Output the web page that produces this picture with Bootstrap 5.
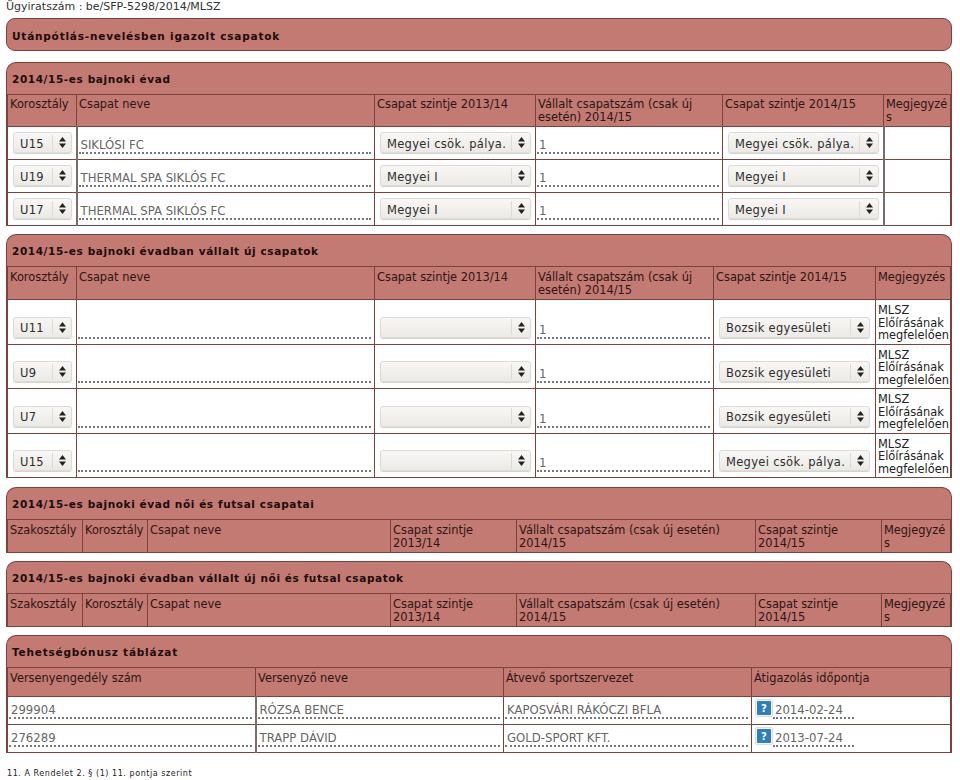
<!DOCTYPE html>
<html lang="hu"><head><meta charset="utf-8"><title>Ügyiratszám</title>
<link href="https://cdn.jsdelivr.net/npm/bootstrap@5.3.0/dist/css/bootstrap.min.css" rel="stylesheet">
<style>
body{font-family:"DejaVu Sans",sans-serif;font-size:11.4px;line-height:13px;color:#222;background:#fff;padding:0 8px 0 6px;width:960px;overflow-x:hidden}
.docno{height:18px;color:#333;font-size:11px}
.pnl{border:1px solid #7d4240;border-bottom:0;border-radius:10px 10px 0 0;background:#c27a73;margin-bottom:8px;overflow:hidden}
.pnl-single{border-radius:9px;height:33px;margin-bottom:11px;border-bottom:1px solid #7d4240}
.pnl-gap{margin-bottom:9px}
.pnl-title{font-weight:700;font-size:10.5px;letter-spacing:.8px;color:#200c0c;height:31px;padding:9px 0 0 5px;line-height:14px}
.pnl-single .pnl-title{padding-top:10px}
.pnl-title-num{letter-spacing:.6px}
.grid{width:100%;border-collapse:collapse;table-layout:fixed;margin:0}
.grid th,.grid td{border:1px solid #7d4240;padding:3px 2px 2px;font-weight:400;vertical-align:top;color:#2a1414;overflow:hidden}
.grid thead th{color:#2e1414;height:32px}
.grid.t-b thead th,.grid.t-c thead th{height:33px;padding-top:4px;padding-bottom:1px}
.grid th.wrapall{word-break:break-all}
.grid td{background:#fff;vertical-align:bottom;padding:0 3px 5px}
.grid td.gl{border-left:2px solid #7d6a6a}
.grid td.note{vertical-align:top;padding:4px 0 0 2px;color:#222;line-height:12.5px}
.r33{height:33px}.r44{height:44.5px}.r28{height:28px}
.grid td.plain{padding:0 3px 5px 1px;vertical-align:bottom}
.fld{display:block;border-bottom:2px dotted #777;color:#666;height:19px;line-height:21px;padding-left:2px;white-space:nowrap;overflow:hidden;font-size:11.7px}
.pick{display:flex;align-items:center;height:21px;border:1px solid #dedbd6;border-radius:3px;background:linear-gradient(#f8f7f5,#eceae6);box-shadow:0 1px 1px #d4d1cc;color:#2d2d2d;padding-left:6px;margin:0 0 1px 2px;font-size:11.5px;letter-spacing:.3px;white-space:nowrap}
.pick-lbl{flex:1 1 auto;padding-top:3px;overflow:hidden}
.pick-arr{flex:0 0 19px;height:16px;border-left:1px solid #dedbd6;display:flex;align-items:center;justify-content:center}
.pick-w1{width:59px}
.pick-w2{width:151px}
.pick-w4{width:151px}
.t-a col:nth-child(1){width:69px}.t-a col:nth-child(2){width:298px}.t-a col:nth-child(3){width:161px}.t-a col:nth-child(4){width:187px}.t-a col:nth-child(5){width:161px}
.t-b col:nth-child(1){width:69px}.t-b col:nth-child(2){width:298px}.t-b col:nth-child(3){width:161px}.t-b col:nth-child(4){width:178px}.t-b col:nth-child(5){width:162px}
.t-c col:nth-child(1){width:75px}.t-c col:nth-child(2){width:65px}.t-c col:nth-child(3){width:243px}.t-c col:nth-child(4){width:126px}.t-c col:nth-child(5){width:239px}.t-c col:nth-child(6){width:126px}
.t-d col:nth-child(1){width:248px}.t-d col:nth-child(2){width:248px}.t-d col:nth-child(3){width:248px}
.grid.t-d thead th{height:29px;padding-top:4px}
.helpbtn{flex:0 0 auto;width:18px;height:18px;border:1px solid #d8dde0;background:#f2f4f5;border-radius:2px;display:inline-flex;align-items:center;justify-content:center;margin-bottom:2px}
.datecell{display:flex;align-items:flex-end;padding-left:2px}
.fld-date{width:81px}
.foot{margin-top:15px;padding-left:1px;font-size:8px;letter-spacing:.55px;color:#222;line-height:11px}
</style></head><body>
<div class="docno">Ügyiratszám : be/SFP-5298/2014/MLSZ</div>
<div class="pnl pnl-single"><div class="pnl-title">Utánpótlás-nevelésben igazolt csapatok</div></div>

<div class="pnl"><div class="pnl-title pnl-title-num">2014/15-es bajnoki évad</div>
<table class="grid t-a"><colgroup><col><col><col><col><col><col></colgroup>
<thead><tr><th>Korosztály</th><th>Csapat neve</th><th>Csapat szintje 2013/14</th><th>Vállalt csapatszám (csak új esetén) 2014/15</th><th>Csapat szintje 2014/15</th><th class="wrapall">Megjegyzés</th></tr></thead>
<tbody>
<tr class="r33"><td><div class="pick pick-w1"><span class="pick-lbl">U15</span><span class="pick-arr"><svg width="7" height="11" viewBox="0 0 7 11"><path d="M3.5 0 7 4.5H0zM3.5 11 0 6.5h7z" fill="#222"/></svg></span></div></td><td class="gl plain"><span class="fld">SIKLÓSI FC</span></td><td><div class="pick pick-w2"><span class="pick-lbl">Megyei csök. pálya.</span><span class="pick-arr"><svg width="7" height="11" viewBox="0 0 7 11"><path d="M3.5 0 7 4.5H0zM3.5 11 0 6.5h7z" fill="#222"/></svg></span></div></td><td class="plain"><span class="fld">1</span></td><td><div class="pick pick-w2"><span class="pick-lbl">Megyei csök. pálya.</span><span class="pick-arr"><svg width="7" height="11" viewBox="0 0 7 11"><path d="M3.5 0 7 4.5H0zM3.5 11 0 6.5h7z" fill="#222"/></svg></span></div></td><td class="gl"></td></tr>
<tr class="r33"><td><div class="pick pick-w1"><span class="pick-lbl">U19</span><span class="pick-arr"><svg width="7" height="11" viewBox="0 0 7 11"><path d="M3.5 0 7 4.5H0zM3.5 11 0 6.5h7z" fill="#222"/></svg></span></div></td><td class="gl plain"><span class="fld">THERMAL SPA SIKLÓS FC</span></td><td><div class="pick pick-w2"><span class="pick-lbl">Megyei I</span><span class="pick-arr"><svg width="7" height="11" viewBox="0 0 7 11"><path d="M3.5 0 7 4.5H0zM3.5 11 0 6.5h7z" fill="#222"/></svg></span></div></td><td class="plain"><span class="fld">1</span></td><td><div class="pick pick-w2"><span class="pick-lbl">Megyei I</span><span class="pick-arr"><svg width="7" height="11" viewBox="0 0 7 11"><path d="M3.5 0 7 4.5H0zM3.5 11 0 6.5h7z" fill="#222"/></svg></span></div></td><td class="gl"></td></tr>
<tr class="r33"><td><div class="pick pick-w1"><span class="pick-lbl">U17</span><span class="pick-arr"><svg width="7" height="11" viewBox="0 0 7 11"><path d="M3.5 0 7 4.5H0zM3.5 11 0 6.5h7z" fill="#222"/></svg></span></div></td><td class="gl plain"><span class="fld">THERMAL SPA SIKLÓS FC</span></td><td><div class="pick pick-w2"><span class="pick-lbl">Megyei I</span><span class="pick-arr"><svg width="7" height="11" viewBox="0 0 7 11"><path d="M3.5 0 7 4.5H0zM3.5 11 0 6.5h7z" fill="#222"/></svg></span></div></td><td class="plain"><span class="fld">1</span></td><td><div class="pick pick-w2"><span class="pick-lbl">Megyei I</span><span class="pick-arr"><svg width="7" height="11" viewBox="0 0 7 11"><path d="M3.5 0 7 4.5H0zM3.5 11 0 6.5h7z" fill="#222"/></svg></span></div></td><td class="gl"></td></tr>
</tbody></table></div>

<div class="pnl pnl-gap"><div class="pnl-title pnl-title-num">2014/15-es bajnoki évadban vállalt új csapatok</div>
<table class="grid t-b"><colgroup><col><col><col><col><col><col></colgroup>
<thead><tr><th>Korosztály</th><th>Csapat neve</th><th>Csapat szintje 2013/14</th><th>Vállalt csapatszám (csak új esetén) 2014/15</th><th>Csapat szintje 2014/15</th><th>Megjegyzés</th></tr></thead>
<tbody>
<tr class="r44"><td><div class="pick pick-w1"><span class="pick-lbl">U11</span><span class="pick-arr"><svg width="7" height="11" viewBox="0 0 7 11"><path d="M3.5 0 7 4.5H0zM3.5 11 0 6.5h7z" fill="#222"/></svg></span></div></td><td class="plain"><span class="fld"></span></td><td><div class="pick pick-w2"><span class="pick-lbl"></span><span class="pick-arr"><svg width="7" height="11" viewBox="0 0 7 11"><path d="M3.5 0 7 4.5H0zM3.5 11 0 6.5h7z" fill="#222"/></svg></span></div></td><td class="plain"><span class="fld">1</span></td><td><div class="pick pick-w4"><span class="pick-lbl">Bozsik egyesületi</span><span class="pick-arr"><svg width="7" height="11" viewBox="0 0 7 11"><path d="M3.5 0 7 4.5H0zM3.5 11 0 6.5h7z" fill="#222"/></svg></span></div></td><td class="note">MLSZ Előírásának megfelelően</td></tr>
<tr class="r44"><td><div class="pick pick-w1"><span class="pick-lbl">U9</span><span class="pick-arr"><svg width="7" height="11" viewBox="0 0 7 11"><path d="M3.5 0 7 4.5H0zM3.5 11 0 6.5h7z" fill="#222"/></svg></span></div></td><td class="plain"><span class="fld"></span></td><td><div class="pick pick-w2"><span class="pick-lbl"></span><span class="pick-arr"><svg width="7" height="11" viewBox="0 0 7 11"><path d="M3.5 0 7 4.5H0zM3.5 11 0 6.5h7z" fill="#222"/></svg></span></div></td><td class="plain"><span class="fld">1</span></td><td><div class="pick pick-w4"><span class="pick-lbl">Bozsik egyesületi</span><span class="pick-arr"><svg width="7" height="11" viewBox="0 0 7 11"><path d="M3.5 0 7 4.5H0zM3.5 11 0 6.5h7z" fill="#222"/></svg></span></div></td><td class="note">MLSZ Előírásának megfelelően</td></tr>
<tr class="r44"><td><div class="pick pick-w1"><span class="pick-lbl">U7</span><span class="pick-arr"><svg width="7" height="11" viewBox="0 0 7 11"><path d="M3.5 0 7 4.5H0zM3.5 11 0 6.5h7z" fill="#222"/></svg></span></div></td><td class="plain"><span class="fld"></span></td><td><div class="pick pick-w2"><span class="pick-lbl"></span><span class="pick-arr"><svg width="7" height="11" viewBox="0 0 7 11"><path d="M3.5 0 7 4.5H0zM3.5 11 0 6.5h7z" fill="#222"/></svg></span></div></td><td class="plain"><span class="fld">1</span></td><td><div class="pick pick-w4"><span class="pick-lbl">Bozsik egyesületi</span><span class="pick-arr"><svg width="7" height="11" viewBox="0 0 7 11"><path d="M3.5 0 7 4.5H0zM3.5 11 0 6.5h7z" fill="#222"/></svg></span></div></td><td class="note">MLSZ Előírásának megfelelően</td></tr>
<tr class="r44"><td><div class="pick pick-w1"><span class="pick-lbl">U15</span><span class="pick-arr"><svg width="7" height="11" viewBox="0 0 7 11"><path d="M3.5 0 7 4.5H0zM3.5 11 0 6.5h7z" fill="#222"/></svg></span></div></td><td class="plain"><span class="fld"></span></td><td><div class="pick pick-w2"><span class="pick-lbl"></span><span class="pick-arr"><svg width="7" height="11" viewBox="0 0 7 11"><path d="M3.5 0 7 4.5H0zM3.5 11 0 6.5h7z" fill="#222"/></svg></span></div></td><td class="plain"><span class="fld">1</span></td><td><div class="pick pick-w4"><span class="pick-lbl">Megyei csök. pálya.</span><span class="pick-arr"><svg width="7" height="11" viewBox="0 0 7 11"><path d="M3.5 0 7 4.5H0zM3.5 11 0 6.5h7z" fill="#222"/></svg></span></div></td><td class="note">MLSZ Előírásának megfelelően</td></tr>
</tbody></table></div>

<div class="pnl"><div class="pnl-title pnl-title-num">2014/15-es bajnoki évad női és futsal csapatai</div>
<table class="grid t-c"><colgroup><col><col><col><col><col><col><col></colgroup>
<thead><tr><th>Szakosztály</th><th>Korosztály</th><th>Csapat neve</th><th>Csapat szintje 2013/14</th><th>Vállalt csapatszám (csak új esetén) 2014/15</th><th>Csapat szintje 2014/15</th><th class="wrapall">Megjegyzés</th></tr></thead></table></div>

<div class="pnl"><div class="pnl-title pnl-title-num">2014/15-es bajnoki évadban vállalt új női és futsal csapatok</div>
<table class="grid t-c"><colgroup><col><col><col><col><col><col><col></colgroup>
<thead><tr><th>Szakosztály</th><th>Korosztály</th><th>Csapat neve</th><th>Csapat szintje 2013/14</th><th>Vállalt csapatszám (csak új esetén) 2014/15</th><th>Csapat szintje 2014/15</th><th class="wrapall">Megjegyzés</th></tr></thead></table></div>

<div class="pnl mb-0"><div class="pnl-title">Tehetségbónusz táblázat</div>
<table class="grid t-d"><colgroup><col><col><col><col></colgroup>
<thead><tr><th>Versenyengedély szám</th><th>Versenyző neve</th><th>Átvevő sportszervezet</th><th>Átigazolás időpontja</th></tr></thead>
<tbody>
<tr class="r28"><td class="plain"><span class="fld">299904</span></td><td class="gl plain"><span class="fld">RÓZSA BENCE</span></td><td class="plain"><span class="fld">KAPOSVÁRI RÁKÓCZI BFLA</span></td><td class="plain"><div class="datecell"><span class="helpbtn"><svg width="14" height="14" viewBox="0 0 14 14"><rect width="14" height="14" rx="1" fill="#2f7fb8"/><text x="7" y="11" text-anchor="middle" font-size="10" font-weight="700" fill="#fff" font-family="DejaVu Sans">?</text></svg></span><span class="fld fld-date">2014-02-24</span></div></td></tr>
<tr class="r28"><td class="plain"><span class="fld">276289</span></td><td class="gl plain"><span class="fld">TRAPP DÁVID</span></td><td class="plain"><span class="fld">GOLD-SPORT KFT.</span></td><td class="plain"><div class="datecell"><span class="helpbtn"><svg width="14" height="14" viewBox="0 0 14 14"><rect width="14" height="14" rx="1" fill="#2f7fb8"/><text x="7" y="11" text-anchor="middle" font-size="10" font-weight="700" fill="#fff" font-family="DejaVu Sans">?</text></svg></span><span class="fld fld-date">2013-07-24</span></div></td></tr>
</tbody></table></div>
<div class="foot">11. A Rendelet 2. § (1) 11. pontja szerint</div>
<script src="https://cdn.jsdelivr.net/npm/bootstrap@5.3.0/dist/js/bootstrap.bundle.min.js"></script>
</body></html>
